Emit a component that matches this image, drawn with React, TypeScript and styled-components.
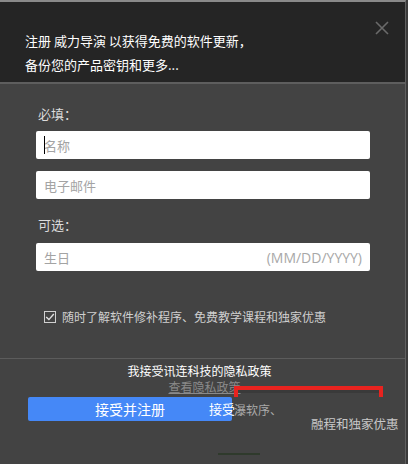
import React from "react";
import styled, { createGlobalStyle } from "styled-components";

const Global = createGlobalStyle`
  html, body { margin: 0; padding: 0; background: #3b3b3b; }
  body { font-family: "Noto Sans CJK SC", "Noto Sans", sans-serif; }
  * { box-sizing: border-box; }
`;

const Window = styled.div`
  width: 406px;
  height: 464px;
  background: #434343;
  border-top: 2px solid #8a8a8a;
  border-right: 1px solid #606060;
  display: flex;
  flex-direction: column;
  position: relative;
  overflow: hidden;
`;

const Header = styled.div`
  height: 82px;
  background: #252525;
  border-bottom: 2px solid #5e5e5e;
  padding: 27px 0 0 25px;
  position: relative;
`;

const HeaderLine = styled.div`
  color: #ffffff;
  font-size: 13px;
  line-height: 24px;
`;

const Close = styled.div`
  position: absolute;
  right: 16px;
  top: 14px;
  width: 14px;
  height: 14px;
`;

const Body = styled.div`
  padding: 21px 38px 0 36px;
  display: flex;
  flex-direction: column;
`;

const Label = styled.div<{ $mb: number }>`
  color: #dcdcdc;
  font-size: 13px;
  line-height: 18px;
  padding-left: 2px;
  margin-bottom: ${(p) => p.$mb}px;
`;

const Field = styled.div<{ $mb: number }>`
  height: 28px;
  width: 334px;
  background: #ffffff;
  border-radius: 2px;
  display: flex;
  align-items: center;
  justify-content: space-between;
  padding: 0 8px 0 8px;
  margin-bottom: ${(p) => p.$mb}px;
  color: #a3a3a3;
  font-size: 13px;
  position: relative;
`;

const Caret = styled.span`
  position: absolute;
  left: 8px;
  top: 5px;
  width: 1px;
  height: 18px;
  background: #000;
`;

const Hint = styled.span`
  font-family: "Open Sans", "Noto Sans", sans-serif;
  color: #a8a8a8;
  font-size: 14px;
`;

const CheckRow = styled.div`
  display: flex;
  align-items: center;
  gap: 6px;
  padding-left: 8px;
  margin-top: 37px;
  color: #cfcfcf;
  font-size: 12px;
`;

const Box = styled.div`
  width: 12px;
  height: 12px;
  border: 1px solid #d0d0d0;
  display: flex;
  align-items: center;
  justify-content: center;
`;

const Divider = styled.div`
  margin-top: 33px;
  height: 1px;
  background: #5c5c5c;
`;

const Footer = styled.div`
  position: relative;
  display: flex;
  flex-direction: column;
  align-items: center;
  padding-top: 4px;
  flex: 1;
`;

const Policy = styled.div`
  color: #ffffff;
  font-size: 12px;
  line-height: 16px;
  margin-left: -6px;
`;

const PolicyLink = styled.div`
  color: #8a8a8a;
  font-size: 12px;
  line-height: 16px;
  text-decoration: underline;
  margin-left: 4px;
`;

const ButtonRow = styled.div`
  align-self: stretch;
  padding-left: 28px;
  margin-top: 2px;
`;

const Primary = styled.div`
  width: 204px;
  height: 24px;
  background: #4588f7;
  border-radius: 2px;
  color: #fff;
  font-size: 14px;
  display: flex;
  align-items: center;
  justify-content: center;
`;

const Glitch = styled.div<{ $x: number; $y: number; $c: string; $fs: number }>`
  position: absolute;
  left: ${(p) => p.$x}px;
  top: ${(p) => p.$y}px;
  color: ${(p) => p.$c};
  font-size: ${(p) => p.$fs}px;
  line-height: 18px;
  white-space: nowrap;
`;

const Bracket = styled.div`
  position: absolute;
  left: 234px;
  top: 27px;
  width: 149px;
  height: 11px;
  border-top: 4px solid #e8231f;
  border-left: 4px solid #e8231f;
  border-right: 4px solid #e8231f;
  &::after {
    content: "";
    position: absolute;
    left: 0;
    right: 0;
    top: 0;
    height: 3px;
    background: #3a3a3a;
  }
`;

const Smudge = styled.div`
  position: absolute;
  left: 218px;
  top: 94px;
  width: 42px;
  height: 2px;
  background: #2f3a2c;
`;

export default function App() {
  return (
    <>
      <Global />
      <Window>
        <Header>
          <HeaderLine>注册 威力导演 以获得免费的软件更新，</HeaderLine>
          <HeaderLine>备份您的产品密钥和更多...</HeaderLine>
          <Close>
            <svg width="14" height="14" viewBox="0 0 14 14">
              <path d="M1 1 L13 13 M13 1 L1 13" stroke="#6a6a6a" strokeWidth="1.6" />
            </svg>
          </Close>
        </Header>
        <Body>
          <Label $mb={8}>必填：</Label>
          <Field $mb={12}>
            <Caret />
            <span>名称</span>
          </Field>
          <Field $mb={17}>
            <span>电子邮件</span>
          </Field>
          <Label $mb={9}>可选：</Label>
          <Field $mb={0}>
            <span>生日</span>
            <Hint>(MM/DD/YYYY)</Hint>
          </Field>
          <CheckRow>
            <Box>
              <svg width="10" height="10" viewBox="0 0 10 10">
                <path d="M1.2 5 L3.9 7.6 L8.8 2" fill="none" stroke="#e0e0e0" strokeWidth="1.4" />
              </svg>
            </Box>
            <span>随时了解软件修补程序、免费教学课程和独家优惠</span>
          </CheckRow>
        </Body>
        <Divider />
        <Footer>
          <Policy>我接受讯连科技的隐私政策</Policy>
          <PolicyLink>查看隐私政策</PolicyLink>
          <ButtonRow>
            <Primary>接受并注册</Primary>
          </ButtonRow>
          <Glitch $x={209} $y={41} $c="#ffffff" $fs={13}>接受</Glitch>
          <Glitch $x={234} $y={42} $c="#a9a9a9" $fs={12}>瀑软序、</Glitch>
          <Glitch $x={311} $y={56} $c="#c8c8c8" $fs={12.5}>融程和独家优惠</Glitch>
          <Bracket />
          <Smudge />
        </Footer>
      </Window>
    </>
  );
}
